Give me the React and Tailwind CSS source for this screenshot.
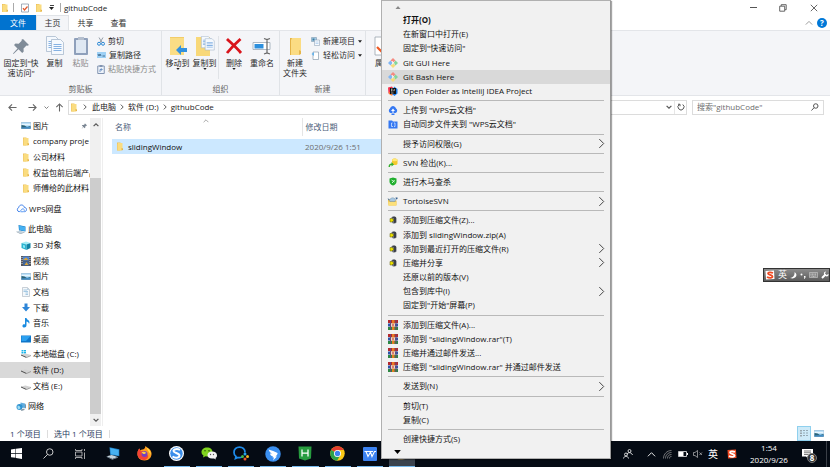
import React from "react";

/* ---------- shared drawings ---------- */

const Folder = ({ className = "h-[9px] w-[8px]" }) => (
  <svg viewBox="0 0 16 18" className={`shrink-0 ${className}`} aria-hidden="true">
    <path d="M2 1h7v16H2z" fill="#edc05a" />
    <path d="M4 2h9v12l-2 3H3V4z" fill="#fadc80" />
    <path d="M11 12l3 1v3l-3 1z" fill="#e5b548" />
  </svg>
);

const Chevron = ({ dir = "right", className = "h-[6px] w-[6px]", width = 1.6 }) => {
  const d = {
    right: "M3 1l4 4-4 4",
    down: "M1 3l4 4 4-4",
    up: "M1 7l4-4 4 4",
  }[dir];
  return (
    <svg viewBox="0 0 10 10" className={`shrink-0 ${className}`} aria-hidden="true">
      <path d={d} fill="none" stroke="currentColor" strokeWidth={width} />
    </svg>
  );
};

const Triangle = ({ up, className = "h-[3px] w-[5px]" }) => (
  <svg viewBox="0 0 10 6" className={`shrink-0 ${className}`} aria-hidden="true">
    <path d={up ? "M0 6l5-6 5 6z" : "M0 0h10L5 6z"} fill="currentColor" />
  </svg>
);

const Pin = ({ className }) => (
  <svg viewBox="0 0 16 16" className={className} aria-hidden="true">
    <path d="M9.500 1l5.500 5.500-1.500 1-1-.3-2.700 2.700.2 3-1.500 1.300L5 10.700 1 15l-.2-.2L4.300 10 .9 6.800l1.400-1.500 3 .2L8.500 3l-.3-1z" fill="#7c8794" />
  </svg>
);

const Picture = () => (
  <svg viewBox="0 0 20 14" className="h-[7px] w-[10px] shrink-0" aria-hidden="true">
    <path d="M0 0h20v14H0z" fill="#b9c6d2" />
    <path d="M1 1h18v12H1z" fill="#8fcdf5" />
    <path d="M1 3h18v4H1z" fill="#e8f5fd" />
    <path d="M1 6l6 1 5 3 7-2v5H1z" fill="#2c6275" />
    <path d="M1 11l18-1v3H1z" fill="#4893d2" />
  </svg>
);

const Drive = ({ system }) => (
  <svg viewBox="0 0 20 16" className="h-[8px] w-[10px] shrink-0" aria-hidden="true">
    {system && <path d="M1 0h4v3H1zM6 0h4v3H6zM1 4h4v3H1zM6 4h4v3H6z" fill="#19b5ea" />}
    <path d="M0 9l9-2 11 3-9 4z" fill="#d2d2d2" />
    <path d="M0 9l11 5v2L0 11z" fill="#4a4a4a" />
    <path d="M11 14l9-4v2l-9 4z" fill="#9a9a9a" />
  </svg>
);

const Sogou = ({ className, bg = "#f04a23", fg = "#fff" }) => (
  <svg viewBox="0 0 20 20" className={`shrink-0 ${className}`} aria-hidden="true">
    <path d="M1 2l17-1 1 17-17 1z" fill={bg} />
    <path d="M16 6C12 4 6 4 6 7s9 2.500 9 6-7 3-11 1" fill="none" stroke={fg} strokeWidth="3.500" />
  </svg>
);

const PcIcon = ({ className = "h-[9px] w-[10px]" }) => (
  <svg viewBox="0 0 20 18" className={`shrink-0 ${className}`} aria-hidden="true">
    <path d="M5 0l14 3v10L6 11z" fill="#1f7fc4" />
    <path d="M6 1l12 3v8L7 10z" fill="#46b1f2" />
    <path d="M1 13l7-2 9 3-8 3z" fill="#c5d3dd" />
    <path d="M1 13l8 4 8-3v1l-8 3-8-4z" fill="#7f909e" />
  </svg>
);

/* ---------- title bar and tabs ---------- */

const TitleBar = () => (
  <header className="flex h-[15px] shrink-0 items-center text-[#222]">
    <div className="flex flex-1 items-center">
      <Folder className="ml-[1px] h-[10px] w-[8px]" />
      <span className="ml-[4px] h-[9px] w-px bg-[#aaa]" />
      <button aria-label="属性" className="ml-[7px]">
        <svg viewBox="0 0 16 18" className="h-[10px] w-[8px]">
          <path d="M1 1h14v16H1z" fill="#fff" stroke="#8492a3" strokeWidth="1.500" />
          <path d="M4 9l3 4 6-7" fill="none" stroke="#e2572b" strokeWidth="2.500" />
        </svg>
      </button>
      <button aria-label="新建文件夹" className="ml-[6px]">
        <Folder className="h-[10px] w-[8px]" />
      </button>
      <button aria-label="自定义快速访问工具栏" className="ml-[6px] flex flex-col items-center gap-px">
        <span className="h-px w-[4px] bg-[#444]" />
        <Triangle className="h-[3px] w-[5px]" />
      </button>
      <span className="ml-[6px] h-[9px] w-px bg-[#aaa]" />
      <h1 className="ml-[3px] text-[8px]">githubCode</h1>
    </div>
    <div className="flex h-full text-[#555]">
      <button aria-label="最小化" className="grid w-[30px] place-items-center">
        <span className="h-px w-[7px] bg-current" />
      </button>
      <button aria-label="还原" className="grid w-[30px] place-items-center">
        <svg viewBox="0 0 8 8" className="h-[8px] w-[8px]" fill="none" stroke="currentColor" strokeWidth="0.900">
          <path d="M.7 2.200h5v5h-5zM2.200 2V.7h5v5H6" />
        </svg>
      </button>
      <button aria-label="关闭" className="grid w-[32px] place-items-center">
        <svg viewBox="0 0 8 8" className="h-[8px] w-[8px]" stroke="currentColor" strokeWidth="0.900">
          <path d="M.8.8l6.400 6.400M7.200.8L.8 7.200" />
        </svg>
      </button>
    </div>
  </header>
);

const Tabs = () => (
  <nav className="flex h-[15px] shrink-0 items-stretch text-[8px] text-[#333]">
    <button className="w-[36px] bg-[#0173cf] text-white">文件</button>
    <button className="w-[33px] border-x border-t border-[#e0e3e7] bg-[#f4f5f8]">主页</button>
    <button className="w-[33px]">共享</button>
    <button className="w-[33px]">查看</button>
    <div className="flex flex-1 items-center justify-end gap-[4px] pr-[3px] text-[#999]">
      <button aria-label="最小化功能区">
        <Chevron dir="up" className="h-[8px] w-[8px]" width={1.2} />
      </button>
      <button aria-label="帮助" className="grid h-[10px] w-[10px] place-items-center rounded-full bg-[#0078d7] text-[8px] leading-none font-bold text-white">
        ?
      </button>
    </div>
  </nav>
);

/* ---------- ribbon ---------- */

const Sheet = ({ x, y }) => (
  <g transform={`translate(${x} ${y})`}>
    <path d="M.5.500h9l3 3v12H.5z" fill="#f5f9fe" stroke="#9fb1c7" strokeWidth="0.700" />
    <path d="M2.500 5h8v1h-8zM2.500 7h8v1h-8zM2.500 9h8v1h-8zM2.500 11h8v1h-8z" fill="#86b2e3" />
  </g>
);

const ribbonIcons = {
  pin: (
    <svg viewBox="0 0 20 20" className="h-[20px] w-[20px]">
      <path d="M12 3l6 6-1.500.8-1-.3-3 3 .2 3-1.500 1.500-3.700-3.700L2.500 18 2 17.500l4.500-5L3 9l1.500-1.500 3.200.2 3-3-.2-1z" fill="#7f8b98" />
    </svg>
  ),
  copy: (
    <svg viewBox="0 0 18 20" className="h-[20px] w-[18px]">
      <Sheet x={0} y={0} />
      <Sheet x={5} y={3} />
    </svg>
  ),
  paste: (
    <svg viewBox="0 0 16 20" className="h-[20px] w-[16px]">
      <rect x="1" y="2" width="14" height="17" rx="1" fill="#8fa0bb" />
      <path d="M3 4h10v13H3z" fill="#dfe8f3" />
      <path d="M5 1h6v3H5z" fill="#b5bfce" />
    </svg>
  ),
  move: (
    <svg viewBox="0 0 18 20" className="h-[20px] w-[18px]">
      <path d="M1 1h14v18H1z" fill="#fadd85" />
      <path d="M1 1h14v1H1z" fill="#f2cc68" />
      <path d="M7 14l5-5v3h6v4h-6v3z" fill="#3291de" />
    </svg>
  ),
  copyTo: (
    <svg viewBox="0 0 20 20" className="h-[20px] w-[20px]">
      <path d="M1 1h14v19H1z" fill="#f8d878" />
      <g transform="translate(6 0) scale(.76)">
        <Sheet x={0} y={0} />
        <Sheet x={5} y={3} />
      </g>
    </svg>
  ),
  remove: (
    <svg viewBox="0 0 18 20" className="h-[20px] w-[18px]">
      <path d="M2 3c3 3 9 8 14 14M15.500 3C11 7 6 12 2 17" fill="none" stroke="#d9141b" strokeWidth="2.800" />
    </svg>
  ),
  rename: (
    <svg viewBox="0 0 20 20" className="h-[20px] w-[20px]">
      <path d="M1 6.500h17v7H1z" fill="#fff" stroke="#9aa7b5" strokeWidth="0.800" />
      <path d="M2.500 8h9v4.500h-9z" fill="#2c8fdd" />
      <path d="M12 2.500l3 1 3-1M15 3v14M12 18l3-1 3 1" fill="none" stroke="#666" strokeWidth="1.200" />
    </svg>
  ),
  newFolder: (
    <svg viewBox="0 0 16 20" className="h-[20px] w-[16px]">
      <path d="M3 2h6v17H3z" fill="#e4b347" />
      <path d="M5 2h9v14l-2 3H4V4z" fill="#fbdc83" />
      <path d="M12 14l2 1v3l-2 1z" fill="#e6b64c" />
    </svg>
  ),
  props: (
    <svg viewBox="0 0 18 20" className="h-[20px] w-[18px]">
      <path d="M1 1h16v18H1z" fill="#fff" stroke="#9aa3ad" strokeWidth="0.800" />
      <path d="M3 11l4 4 7-9" fill="none" stroke="#ef5a24" strokeWidth="2.200" />
    </svg>
  ),
};

const BigButton = ({ icon, lines, drop, className = "w-[27px]", muted }) => (
  <button className={`flex flex-col items-center pt-[5px] leading-[10px] ${className} ${muted ? "text-[#8b8b8b]" : ""}`}>
    {ribbonIcons[icon]}
    <span className="mt-[2px] flex flex-col items-center whitespace-nowrap">
      {lines.map((l) => (
        <span key={l}>{l}</span>
      ))}
    </span>
    {drop && <Triangle className="h-[2px] w-[4px] text-[#222]" />}
  </button>
);

const SmallButton = ({ children, label, drop, muted }) => (
  <button className={`flex h-[14px] items-center gap-[3px] whitespace-nowrap ${muted ? "text-[#8b8b8b]" : ""}`}>
    {children}
    <span>{label}</span>
    {drop && <Triangle className="h-[3px] w-[4px] text-[#222]" />}
  </button>
);

const Group = ({ label, className = "", children }) => (
  <section className={`flex shrink-0 flex-col border-r border-[#e0e3e7] ${className}`}>
    <div className="flex flex-1">{children}</div>
    <h2 className="h-[12px] text-center leading-[12px] text-[#666]">{label}</h2>
  </section>
);

const Ribbon = () => (
  <div className="flex h-[66px] shrink-0 overflow-hidden border-y border-[#e3e5e9] bg-[#f4f5f8] text-[8px] text-[#2b2b2b]">
    <Group label="剪贴板" className="w-[162px]">
      <BigButton icon="pin" lines={["固定到\"快", "速访问\""]} className="w-[42px]" />
      <BigButton icon="copy" lines={["复制"]} className="w-[25px]" />
      <BigButton icon="paste" lines={["粘贴"]} className="w-[27px]" muted />
      <div className="ml-[3px] pt-[3px]">
        <SmallButton label="剪切">
          <svg viewBox="0 0 16 18" className="h-[9px] w-[8px]">
            <path d="M4 1l6 10M12 1L6 11" stroke="#7b8794" strokeWidth="1.600" />
            <circle cx="4" cy="13.500" r="3" fill="none" stroke="#2886d4" strokeWidth="2" />
            <circle cx="12" cy="13.500" r="3" fill="none" stroke="#2886d4" strokeWidth="2" />
          </svg>
        </SmallButton>
        <SmallButton label="复制路径">
          <svg viewBox="0 0 18 12" className="h-[6px] w-[9px]">
            <path d="M0 0h18v12H0z" fill="#9dd0f5" />
            <path d="M2 4l2 4 2-4 2 4M10 8h1M12 8h4" fill="none" stroke="#234a6e" strokeWidth="1.400" />
          </svg>
        </SmallButton>
        <SmallButton label="粘贴快捷方式" muted>
          <svg viewBox="0 0 16 18" className="h-[9px] w-[8px]">
            <path d="M1.500 2h13v15h-13z" fill="#eef3fa" stroke="#8294b1" strokeWidth="2" />
            <path d="M5 0h6v4H5z" fill="#8294b1" />
            <path d="M6 14V9h4M8 6.500L10.500 9 8 11.500" fill="none" stroke="#4d7bb5" strokeWidth="1.500" />
          </svg>
        </SmallButton>
      </div>
    </Group>
    <Group label="组织" className="w-[118px]">
      <BigButton icon="move" lines={["移动到"]} drop className="ml-[2px] w-[27px]" />
      <BigButton icon="copyTo" lines={["复制到"]} drop />
      <span className="mt-[5px] mb-[4px] w-px bg-[#e0e3e7]" />
      <BigButton icon="remove" lines={["删除"]} drop className="w-[30px]" />
      <BigButton icon="rename" lines={["重命名"]} className="w-[26px]" />
    </Group>
    <Group label="新建" className="w-[86px]">
      <BigButton icon="newFolder" lines={["新建", "文件夹"]} className="w-[30px]" />
      <div className="ml-px pt-[3px]">
        <SmallButton label="新建项目" drop>
          <svg viewBox="0 0 18 18" className="h-[9px] w-[9px]">
            <path d="M1 1h10v8H1z" fill="#a7cce8" stroke="#6f8ba2" />
            <path d="M3 3h4v4H3z" fill="#397d9f" />
            <path d="M7 6h10v11H7z" fill="#f6fafe" stroke="#8297ac" />
            <path d="M9 10h6M9 13h6" stroke="#86b2e3" />
          </svg>
        </SmallButton>
        <SmallButton label="轻松访问" drop>
          <svg viewBox="0 0 18 18" className="h-[9px] w-[9px]">
            <path d="M4 2h11v15H4z" fill="#fff" stroke="#8b9cae" strokeWidth="1.400" />
            <path d="M1 6l5-4v8z" fill="#68b3ea" />
          </svg>
        </SmallButton>
      </div>
    </Group>
    <BigButton icon="props" lines={["属性"]} drop className="ml-[3px] w-[28px] shrink-0" />
  </div>
);

/* ---------- address bar ---------- */

const Arrow = ({ turn = "" }) => (
  <svg viewBox="0 0 10 10" className={`h-[9px] w-[9px] ${turn}`} fill="none" stroke="currentColor" strokeWidth="1.200">
    <path d="M9.500 5H1M4.500 1.500L1 5l3.500 3.500" />
  </svg>
);

const AddressRow = () => (
  <div className="flex h-[22px] shrink-0 items-center text-[8px] text-[#666]">
    <div className="flex w-[68px] items-center pl-[8px]">
      <button aria-label="后退"><Arrow /></button>
      <button aria-label="前进" className="ml-[11px]"><Arrow turn="rotate-180" /></button>
      <button aria-label="最近位置" className="ml-[7px]"><Chevron dir="down" className="h-[5px] w-[5px]" /></button>
      <button aria-label="上移" className="ml-[6px]"><Arrow turn="rotate-90" /></button>
    </div>
    <div className="flex h-[15px] flex-1 items-center border border-[#dcdcdc] pl-[1px] text-[#222]">
      <Folder />
      <Chevron className="mx-[4px] h-[6px] w-[6px] text-[#555]" />
      <a href="#pc">此电脑</a>
      <Chevron className="mx-[3px] h-[6px] w-[6px] text-[#555]" />
      <a href="#d">软件 (D:)</a>
      <Chevron className="mx-[3px] h-[6px] w-[6px] text-[#555]" />
      <a href="#code">githubCode</a>
      <span className="flex-1" />
      <button aria-label="以前的位置" className="mr-[2px] text-[#555]"><Chevron dir="down" className="h-[6px] w-[6px]" width={2} /></button>
      <button aria-label="刷新" className="grid h-full w-[12px] place-items-center border-l border-[#e6e6e6]">
        <svg viewBox="0 0 16 16" className="h-[8px] w-[8px]" fill="none" stroke="#555" strokeWidth="2">
          <path d="M11.500 3a6 6 0 1 1-7 0M2 2.500h4v4" />
        </svg>
      </button>
    </div>
    <label className="mr-[6px] ml-[5px] flex h-[15px] w-[132px] items-center border border-[#dcdcdc] px-[4px]">
      <input aria-label="搜索" placeholder={'搜索"githubCode"'} className="w-full min-w-0 bg-transparent outline-none placeholder:text-[#6d6d6d]" />
      <svg viewBox="0 0 16 16" className="h-[8px] w-[8px] shrink-0" fill="none" stroke="#555" strokeWidth="2">
        <circle cx="9.500" cy="6" r="4.500" />
        <path d="M6 9.500L1 15" />
      </svg>
    </label>
  </div>
);

/* ---------- navigation pane ---------- */

const navIcons = {
  picture: <Picture />,
  folder: <span className="flex w-[10px] shrink-0 justify-center"><Folder className="h-[9px] w-[8px]" /></span>,
  cloud: (
    <svg viewBox="0 0 22 18" className="h-[9px] w-[11px] shrink-0" fill="none" strokeWidth="2">
      <path d="M6 15.500a4.500 4.500 0 0 1-.5-8.500C6 3.500 8.500 2 11 2c3 0 5 2 5.300 4.500 2.700.3 4.700 2 4.700 4.500 0 2.700-2 4.500-4.500 4.500" stroke="#3f80ea" />
      <path d="M6 15.500c4 0 4-6 8-6 3 0 4 6 0 6H9" stroke="#5d9bf4" />
    </svg>
  ),
  pc: <PcIcon />,
  cube: (
    <svg viewBox="0 0 20 18" className="h-[9px] w-[10px] shrink-0">
      <path d="M1 4l9-3 9 3-8 3z" fill="#a4edf5" />
      <path d="M1 4l10 3v11L1 14z" fill="#2bb4d1" />
      <path d="M19 4l-8 3v11l8-4z" fill="#1183a5" />
      <path d="M4 8l4 1v5l-4-1z" fill="#8ae7f2" />
    </svg>
  ),
  video: (
    <svg viewBox="0 0 20 20" className="h-[10px] w-[10px] shrink-0">
      <path d="M0 0h20v20H0z" fill="#53565e" />
      <path d="M4 1h12v8H4z" fill="#4e86d6" />
      <path d="M4 11h12v8H4z" fill="#40679e" />
      <path d="M5 7l5-4 5 5H5zM7 18l4-6 4 6z" fill="#d9a43a" />
      <path d="M1 2h2v2H1zM1 6h2v2H1zM1 10h2v2H1zM1 14h2v2H1zM17 2h2v2h-2zM17 6h2v2h-2zM17 10h2v2h-2zM17 14h2v2h-2z" fill="#d5d7dc" />
    </svg>
  ),
  doc: (
    <svg viewBox="0 0 20 20" className="h-[10px] w-[10px] shrink-0">
      <path d="M3 1h10l4 4v14H3z" fill="#f4f8fb" stroke="#98a5b1" />
      <path d="M5 6h7M5 9h9M9 12h5M9 15h5" stroke="#7aaed6" strokeWidth="1.300" />
      <path d="M12 1v5h5z" fill="#bed0df" />
    </svg>
  ),
  download: (
    <svg viewBox="0 0 20 18" className="h-[9px] w-[10px] shrink-0">
      <path d="M7 1h6v7h5l-8 9-8-9h5z" fill="#2e86d8" />
    </svg>
  ),
  music: (
    <svg viewBox="0 0 20 20" className="h-[10px] w-[10px] shrink-0">
      <path d="M8 0h3c1 4 6 4 6 9l-1 3c0-3-3-5-5-5v7c0 7-9 6-8 1 .5-2 3-3 5-2z" fill="#1a8be0" />
    </svg>
  ),
  desktop: (
    <svg viewBox="0 0 20 16" className="h-[8px] w-[10px] shrink-0">
      <path d="M0 1h20v14H0z" fill="#1076c9" />
      <path d="M1 2h18l-9 10H1z" fill="#2ba0f0" />
    </svg>
  ),
  driveC: <Drive system />,
  drive: <Drive />,
  network: (
    <svg viewBox="0 0 20 18" className="h-[9px] w-[10px] shrink-0">
      <path d="M9 1l9 2v9l-9-1z" fill="#63adde" />
      <path d="M18 3l2 2v8l-2-1z" fill="#7c95a7" />
      <circle cx="7" cy="10" r="6" fill="#2f92d0" />
      <path d="M3 7l4 1 2 4-3 3-3-2z" fill="#9cdcf4" />
      <path d="M9 15l8-2v3l-6 2z" fill="#8699a6" />
    </svg>
  ),
};

const navRows = [
  { icon: "picture", label: "图片", pinned: true },
  { icon: "folder", label: "company proje" },
  { icon: "folder", label: "公司材料" },
  { icon: "folder", label: "权益包前后端产品" },
  { icon: "folder", label: "师傅给的此材料" },
  { icon: "cloud", label: "WPS网盘", root: true },
  { icon: "pc", label: "此电脑", root: true },
  { icon: "cube", label: "3D 对象" },
  { icon: "video", label: "视频" },
  { icon: "picture", label: "图片" },
  { icon: "doc", label: "文档" },
  { icon: "download", label: "下载" },
  { icon: "music", label: "音乐" },
  { icon: "desktop", label: "桌面" },
  { icon: "driveC", label: "本地磁盘 (C:)" },
  { icon: "drive", label: "软件 (D:)", active: true },
  { icon: "drive", label: "文档 (E:)" },
  { icon: "network", label: "网络", root: true },
];

const NavPane = () => (
  <aside className="flex w-[103px] shrink-0 border-r border-[#eee]">
    <nav className="flex w-[90px] flex-col overflow-hidden pb-[12px] text-[8px] text-[#111]">
      {navRows.map((r, i) => (
        <button
          key={i}
          className={`flex min-h-0 flex-1 items-center whitespace-nowrap ${r.root ? "mt-[5px] gap-[2px] pl-[16px]" : "gap-[2px] pl-[21px]"} ${r.active ? "bg-[#d9d9d9]" : ""}`}
        >
          {navIcons[r.icon]}
          <span>{r.label}</span>
          {r.pinned && <Pin className="mr-[2px] ml-auto h-[6px] w-[7px]" />}
        </button>
      ))}
    </nav>
    <div className="flex w-[11px] flex-col items-center bg-[#f0f0f0] text-[#555]">
      <Chevron dir="up" className="my-[4px] h-[6px] w-[6px]" width={2} />
      <span className="mt-[46px] w-full flex-1 bg-[#cdcdcd]" />
      <Chevron dir="down" className="my-[3px] h-[6px] w-[6px]" width={2} />
    </div>
  </aside>
);

/* ---------- file list ---------- */

const FileList = () => (
  <main className="min-w-0 flex-1 pl-[9px] text-[8px]">
    <table className="w-2/3 table-fixed border-collapse text-left">
      <thead>
        <tr className="h-[18px] text-[#4c607a]">
          <th className="w-[190px] border-r border-[#e5e5e5] p-0 pl-[3px] font-normal">
            <div className="flex items-center">
              <span className="w-[88px]">名称</span>
              <Chevron dir="up" className="mb-[12px] h-[6px] w-[6px] text-[#888]" width={1.2} />
            </div>
          </th>
          <th className="p-0 pl-[3px] font-normal">修改日期</th>
        </tr>
      </thead>
      <tbody>
        <tr className="h-[3px]" />
        <tr className="h-[15px] bg-[#cce8ff]">
          <td className="p-0 pl-[4px]">
            <a href="#sliding" className="flex items-center gap-[4px] text-[#111]">
              <Folder />
              slidingWindow
            </a>
          </td>
          <td className="p-0 pl-[3px] text-[#6d6d6d]">2020/9/26 1:51</td>
        </tr>
      </tbody>
    </table>
  </main>
);

const StatusBar = () => (
  <footer className="flex h-[15px] shrink-0 items-center pl-[10px] text-[8px] text-[#1e395b]">
    <span className="w-[37px]">1 个项目</span>
    <span className="h-[8px] w-px bg-[#ddd]" />
    <span className="w-[61px] pl-[6px]">选中 1 个项目</span>
    <span className="h-[8px] w-px bg-[#ddd]" />
    <div className="ml-auto flex items-center gap-[3px] self-stretch pr-[6px]">
      <button aria-label="详细信息" className="grid h-full w-[14px] place-items-center border border-[#8fd0ee] bg-[#cdeaf8]">
        <svg viewBox="0 0 18 18" className="h-[9px] w-[10px]">
          <path d="M1 2h4v3H1zM1 7h4v3H1zM1 12h4v3H1z" fill="#9aa7ae" />
          <path d="M7 3h4M13 3h4M7 8h4M13 8h4M7 13h4M13 13h4" stroke="#81939d" strokeWidth="1.500" />
        </svg>
      </button>
      <button aria-label="大图标"><Picture /></button>
    </div>
  </footer>
);

/* ---------- context menu ---------- */

const GitIcon = () => (
  <svg viewBox="0 0 20 20" className="h-[10px] w-[10px]">
    <path d="M10 0l5 5-5 4-5-4z" fill="#f58a80" />
    <path d="M0 10l5-5 4 5-4 5z" fill="#7fb6f5" />
    <path d="M20 10l-5-5-4 5 4 5z" fill="#85d59b" />
    <path d="M10 20l-5-5 5-4 5 4z" fill="#f6dc7b" />
    <path d="M8 6l5 5M9 7v6" stroke="#fff" strokeWidth="1.200" />
  </svg>
);

const ArchiveIcon = () => (
  <svg viewBox="0 0 16 16" className="h-[8px] w-[8px]">
    <path d="M5 2h8l2 2v9l-3 2H8l-2-2z" fill="#6d7178" />
    <path d="M7 1h5l2 2v9l-2 2h-2V4H7z" fill="#3b3f48" />
    <path d="M2 5h4l4 3-4 4H2z" fill="#eadf00" stroke="#5f5900" strokeWidth="1" />
  </svg>
);

const RarIcon = () => (
  <svg viewBox="0 0 20 20" className="h-[10px] w-[10px]">
    <path d="M0 0h20v6H0z" fill="#b3272d" />
    <path d="M0 7h20v6H0z" fill="#2d53a8" />
    <path d="M0 14h20v6H0z" fill="#2c8742" />
    <path d="M4 0h2v20H4zM15 0h2v20h-2z" fill="#6d4a77" />
    <path d="M8 0h5v20H8z" fill="#e77b25" />
    <path d="M6 7h8v6H6z" fill="#f3d9c0" />
    <path d="M9 8h2v4H9z" fill="#b3272d" />
  </svg>
);

const menuIcons = {
  git: <GitIcon />,
  zip: <ArchiveIcon />,
  rar: <RarIcon />,
  idea: (
    <svg viewBox="0 0 20 20" className="h-[10px] w-[10px]">
      <path d="M0 3l8-2 6 9-6 9-7-4z" fill="#f4324e" />
      <path d="M12 1l7 5v9l-6 5-5-4z" fill="#1b7de8" />
      <path d="M1 12l5 1 3 6-5-1z" fill="#f98a28" />
      <path d="M4 4h12v12H4z" fill="#111" />
      <path d="M6 6h3M7.500 6v4M6 10h3M12.500 6v3.500H10.500M6 14h5" fill="none" stroke="#fff" strokeWidth="1.200" />
    </svg>
  ),
  upload: (
    <svg viewBox="0 0 20 18" className="h-[9px] w-[10px]">
      <path d="M5 14a5 5 0 0 1-1-9C5 2 7.500 0 10 0s5 2 6 5a5 5 0 0 1-1 9z" fill="#3578f2" />
      <path d="M10 5l4 5h-3v5H9v-5H6z" fill="#fff" />
      <path d="M7 15h6v3H7z" fill="#3578f2" />
    </svg>
  ),
  sync: (
    <svg viewBox="0 0 20 18" className="h-[9px] w-[10px]">
      <path d="M1 1h7l2 2h9v14H1z" fill="#3578f2" />
      <path d="M9 6H7v7h3M12 6h2v7h-2" fill="none" stroke="#dbe8ff" strokeWidth="1.500" />
    </svg>
  ),
  svn: (
    <svg viewBox="0 0 20 20" className="h-[10px] w-[10px]">
      <path d="M8 4c0-4 11-4 11 0v7c0 4-11 4-11 0z" fill="#f4c92f" />
      <ellipse cx="13.500" cy="4" rx="5.500" ry="2.500" fill="#ffe877" />
      <path d="M1 18c0-5 3-7 6-7V8l5 5-5 4v-3c-2 0-3 1-3 4z" fill="#37ae2f" />
    </svg>
  ),
  shield: (
    <svg viewBox="0 0 16 18" className="h-[9px] w-[8px]">
      <path d="M8 1l7 2v6c0 4-3 7-7 8-4-1-7-4-7-8V3z" fill="#1fae2d" />
      <path d="M5 6l6 4M11 6l-2 3-3 3" fill="none" stroke="#dffbe1" strokeWidth="1.800" />
    </svg>
  ),
  tortoise: (
    <svg viewBox="0 0 22 20" className="h-[10px] w-[11px]">
      <path d="M2 7h8l2 2h7v10H3z" fill="#f2c440" />
      <path d="M3 12h16l-1 7H3z" fill="#fce07a" />
      <path d="M5 10c0-7 10-9 12-2l-1 3H6z" fill="#a9c8e2" stroke="#6f8fab" />
      <path d="M17 3h4v3l-3 1zM1 5l4 1-1 3z" fill="#37618f" />
    </svg>
  ),
};

const menuItems = [
  { label: "打开(O)", bold: true },
  { label: "在新窗口中打开(E)" },
  { label: "固定到\"快速访问\"" },
  { label: "Git GUI Here", icon: "git" },
  { label: "Git Bash Here", icon: "git", active: true },
  { label: "Open Folder as IntelliJ IDEA Project", icon: "idea" },
  null,
  { label: "上传到 \"WPS云文档\"", icon: "upload" },
  { label: "自动同步文件夹到 \"WPS云文档\"", icon: "sync" },
  null,
  { label: "授予访问权限(G)", sub: true },
  null,
  { label: "SVN 检出(K)...", icon: "svn" },
  null,
  { label: "进行木马查杀", icon: "shield" },
  null,
  { label: "TortoiseSVN", icon: "tortoise", sub: true },
  null,
  { label: "添加到压缩文件(Z)...", icon: "zip" },
  { label: "添加到 slidingWindow.zip(A)", icon: "zip" },
  { label: "添加到最近打开的压缩文件(R)", icon: "zip", sub: true },
  { label: "压缩并分享", icon: "zip", sub: true },
  { label: "还原以前的版本(V)" },
  { label: "包含到库中(I)", sub: true },
  { label: "固定到\"开始\"屏幕(P)" },
  null,
  { label: "添加到压缩文件(A)...", icon: "rar" },
  { label: "添加到 \"slidingWindow.rar\"(T)", icon: "rar" },
  { label: "压缩并通过邮件发送...", icon: "rar" },
  { label: "压缩到 \"slidingWindow.rar\" 并通过邮件发送", icon: "rar" },
  null,
  { label: "发送到(N)", sub: true },
  null,
  { label: "剪切(T)" },
  { label: "复制(C)" },
  null,
  { label: "创建快捷方式(S)" },
];

const ContextMenu = () => (
  <div
    role="menu"
    className="absolute top-0 bottom-[8px] left-[381px] flex w-[230px] flex-col border border-[#b0b0b0] border-r-[#999] bg-[#f1f1f1] text-[8px] text-[#111] shadow-[1px_1px_1px_rgba(0,0,0,0.35)]"
  >
    <div className="flex h-[12px] shrink-0 items-center pl-[13px] text-[#888]">
      <Triangle up className="h-[3px] w-[6px]" />
    </div>
    {menuItems.map((m, i) =>
      m ? (
        <button
          key={i}
          role="menuitem"
          className={`flex min-h-0 flex-1 items-center text-left leading-[12px] whitespace-nowrap ${m.active ? "bg-[#d9d9d9]" : ""} ${m.bold ? "font-bold" : ""}`}
        >
          <span className="flex w-[21px] shrink-0 justify-center">{menuIcons[m.icon]}</span>
          <span className="flex-1">{m.label}</span>
          {m.sub && <Chevron className="mr-[3px] h-[11px] w-[11px] text-[#444]" width={0.9} />}
        </button>
      ) : (
        <div key={i} role="separator" className="flex h-[5px] shrink-0 items-center px-[6px]">
          <span className="h-px flex-1 bg-[#b9b9b9]" />
        </div>
      )
    )}
    <div className="flex h-[12px] shrink-0 items-center pl-[12px] text-black">
      <Triangle className="h-[4px] w-[7px]" />
    </div>
  </div>
);

/* ---------- floating input method bar ---------- */

const ImeBar = () => (
  <div className="absolute top-[268px] right-0 flex h-[14px] w-[67px] items-center gap-[3px] border border-[#333] bg-linear-to-b from-[#8c8c8c] to-[#5c5c5c] px-px text-[9px] text-white">
    <Sogou className="h-[10px] w-[10px]" bg="#fff" fg="#f04a23" />
    <span className="w-[9px] leading-[10px]">英</span>
    <svg viewBox="0 0 14 14" className="h-[7px] w-[7px] shrink-0"><path d="M9 0c8 5 3 16-9 12 6-1 10-5 9-12z" fill="#fff" /></svg>
    <svg viewBox="0 0 12 14" className="h-[7px] w-[6px] shrink-0" fill="#fff"><circle cx="3" cy="5" r="2" /><path d="M8 8h3v3l-2 3H8l1-3H8z" /></svg>
    <svg viewBox="0 0 18 12" className="h-[6px] w-[9px] shrink-0"><path d="M1 1h16v10H1z" fill="#888" stroke="#ddd" /><path d="M3 4h12M3 6h12M5 9h8" stroke="#eee" strokeDasharray="2 1" /></svg>
    <svg viewBox="0 0 16 16" className="h-[8px] w-[8px] shrink-0"><path d="M2 14l7-7" stroke="#fff" strokeWidth="4" /><path d="M10 1L8 5l3 3 4-2c1 4-3 6-6 4L6 7c-1-4 1-6 4-6z" fill="#fff" /></svg>
  </div>
);

/* ---------- taskbar ---------- */

const taskApps = [
  {
    name: "开始",
    art: <svg viewBox="0 0 22 22" className="h-[11px] w-[11px]" fill="#fff"><path d="M0 3l9-1.300V10H0zM10 1.500L22 0v10H10zM0 11.500h9v8L0 18.300zM10 11.500h12V22l-12-1.800z" /></svg>,
  },
  {
    name: "搜索",
    art: <svg viewBox="0 0 22 22" className="h-[11px] w-[11px]" fill="none" stroke="#ddd" strokeWidth="1.800"><circle cx="13.500" cy="8" r="6.500" /><path d="M9 13l-8 8" /></svg>,
  },
  {
    name: "任务视图",
    art: <svg viewBox="0 0 22 20" className="h-[10px] w-[11px]" fill="none" stroke="#ccc" strokeWidth="1.600"><path d="M1 0v3h13V0M1 6h13v8H1zM1 20v-3h13v3M19 0v4M19 7v13" /></svg>,
  },
  { name: "此电脑", art: <PcIcon className="h-[13px] w-[14px]" /> },
  {
    name: "Firefox",
    art: (
      <svg viewBox="0 0 30 30" className="h-[15px] w-[15px]">
        <path d="M17 0c4 4 11 6 12 14 1 8-5 15-14 15S0 23 1 14c0-4 2-7 4-9l1 4c3-3 7-1 9-4 2-2 1-4 2-5z" fill="#ff9b1f" />
        <path d="M1 14c0-4 2-7 4-9l2 5 6 1-4 4c1 6 10 7 13 2 2 8-4 11-8 11C6 28 0 22 1 14z" fill="#f34136" />
        <circle cx="15" cy="16" r="6" fill="#7440c2" />
        <path d="M9 13c3-3 8-1 10 1-3 0-3 3-6 2z" fill="#ffd23c" />
        <path d="M19 3c7 4 9 10 8 15-2-7-5-7-8-15z" fill="#ffe14a" />
      </svg>
    ),
  },
  {
    name: "搜狗浏览器", open: true,
    art: <svg viewBox="0 0 30 30" className="h-[15px] w-[15px]"><circle cx="15" cy="15" r="15" fill="#fff" /><circle cx="15" cy="15" r="12.500" fill="#3b8eea" /><path d="M22 8c-5-3-13-2-13 2s12 4 12 9-9 6-14 2" fill="none" stroke="#fff" strokeWidth="4" /></svg>,
  },
  {
    name: "微信", open: true,
    art: (
      <svg viewBox="0 0 32 26" className="h-[13px] w-[16px]">
        <path d="M12 1c7 0 11 4 11 9s-5 9-11 9l-3-.5L4 21l1-4C2 15 1 13 1 10c0-5 5-9 11-9z" fill="#80d31f" />
        <circle cx="8" cy="7.500" r="1.500" fill="#264a0a" /><circle cx="16" cy="7.500" r="1.500" fill="#264a0a" />
        <path d="M22 9c6 0 10 3 10 8 0 2-1 4-3 5l1 3-4-2h-4c-6 0-9-3-9-7s4-7 9-7z" fill="#f2f2f2" />
        <circle cx="19" cy="15" r="1.300" fill="#555" /><circle cx="25" cy="15" r="1.300" fill="#555" />
      </svg>
    ),
  },
  {
    name: "企业微信", open: true,
    art: (
      <svg viewBox="0 0 32 30" className="h-[15px] w-[16px]">
        <path d="M24 13C24 6 19 2 13 2S2 6 2 13c0 3 1 6 4 8l-1 4 5-2c3 1 6 0 8-1" fill="none" stroke="#1e8bea" strokeWidth="3.500" />
        <circle cx="24" cy="16" r="3" fill="#26a6e8" /><circle cx="29" cy="21" r="3" fill="#f6b51d" /><circle cx="24" cy="26" r="3" fill="#e8532b" /><circle cx="19" cy="21" r="3" fill="#46b946" />
      </svg>
    ),
  },
  {
    name: "钉钉", open: true,
    art: <svg viewBox="0 0 32 32" className="h-[16px] w-[16px]"><circle cx="16" cy="16" r="15.500" fill="#3b8ff0" /><path d="M7 7c6 2 13 4 18 7 1 2-2 5-4 7h3l-8 8 2-6h-3l1-2c-4-1-6-4-6-6h4c-4-2-6-5-7-8z" fill="#fff" /></svg>,
  },
  {
    name: "HBuilder", open: true,
    art: <svg viewBox="0 0 28 30" className="h-[15px] w-[14px]"><path d="M1 1h26l-1 24-12 4-12-4z" fill="#279c3f" /><path d="M8 7v14M20 7v14M8 14h12" stroke="#fff" strokeWidth="2.500" /></svg>,
  },
  {
    name: "Chrome", open: true,
    art: (
      <svg viewBox="0 0 30 30" className="h-[15px] w-[15px]">
        <circle cx="15" cy="15" r="14.500" fill="#fbc916" />
        <path d="M15 15L2.400 7.800A14.500 14.500 0 0 1 27.600 7.800H15z" fill="#e53e30" />
        <path d="M2.400 7.800A14.500 14.500 0 0 0 14 29.500L21 18l-6-3z" fill="#2ca14b" />
        <circle cx="15" cy="15" r="7" fill="#fff" /><circle cx="15" cy="15" r="5.300" fill="#3f82ee" />
      </svg>
    ),
  },
  {
    name: "WPS", open: true,
    art: <svg viewBox="0 0 28 28" className="h-[14px] w-[14px]"><rect width="28" height="28" rx="2" fill="#3c82f0" /><path d="M3 9h17M6 9l4 10 5-9 3 9 5-10h3" fill="none" stroke="#fff" strokeWidth="2.200" /></svg>,
  },
  {
    name: "文件资源管理器", open: true, current: true,
    art: <Folder className="h-[13px] w-[14px]" />,
  },
];

const Taskbar = () => (
  <footer className="flex h-[26px] shrink-0 justify-between bg-[#050b14] text-white">
    <div className="flex w-[418px]">
      {taskApps.map((a) => (
        <button key={a.name} aria-label={a.name} className="flex flex-1 flex-col items-center px-[3px]">
          <span className={`grid w-full flex-1 place-items-center ${a.current ? "bg-[#3b434e]" : ""}`}>{a.art}</span>
          <span className={`h-px w-full ${a.open ? "bg-[#76b9ed]" : ""}`} />
        </button>
      ))}
    </div>
    <div className="flex items-center">
      <button aria-label="人脉" className="mr-[14px]">
        <svg viewBox="0 0 20 20" className="h-[10px] w-[10px]" fill="none" stroke="#fff" strokeWidth="1.600"><circle cx="13" cy="4" r="3" /><path d="M8 11c1-5 9-5 11 1" /><circle cx="6" cy="11" r="3" /><path d="M1 19c1-6 9-6 10 0" /></svg>
      </button>
      <button aria-label="显示隐藏的图标" className="mr-[7px]"><Chevron dir="up" className="h-[9px] w-[9px]" width={1} /></button>
      <svg viewBox="0 0 18 18" className="mr-[6px] h-[9px] w-[9px]" fill="none" stroke="#aaa" strokeWidth="1.300"><path d="M1 17C1 8 8 1 17 1M5 17C5 10 10 5 17 5M9 17c0-5 3-8 8-8M13 17c0-3 1-4 4-4" /></svg>
      <svg viewBox="0 0 20 12" className="mr-[5px] h-[6px] w-[10px]"><path d="M1 1h16v10H1z" fill="none" stroke="#fff" strokeWidth="1.500" /><path d="M2 2h9v8H2zM18 4h2v4h-2z" fill="#fff" /></svg>
      <svg viewBox="0 0 20 16" className="mr-[5px] h-[8px] w-[10px]" fill="none" stroke="#ccc" strokeWidth="1.300"><path d="M1 5h3l5-4v14l-5-4H1zM13 5l5 5M18 5l-5 5" /></svg>
      <span className="mr-[9px] text-[10px]">英</span>
      <Sogou className="mr-[12px] h-[10px] w-[10px]" />
      <time className="mr-[13px] flex w-[40px] flex-col items-center text-[8px] leading-[12px] whitespace-nowrap">
        <span>1:54</span>
        <span>2020/9/26</span>
      </time>
      <button aria-label="通知" className="relative mr-[9px] h-[18px] w-[15px]">
        <svg viewBox="0 0 22 20" className="h-[10px] w-[11px]"><path d="M0 0h22v15h-9v5l-5-5H0z" fill="#fff" /><path d="M4 4h14M4 7.500h14M4 11h9" stroke="#333" strokeWidth="1.300" /></svg>
        <span className="absolute right-0 bottom-0 grid h-[10px] w-[10px] place-items-center rounded-full border border-[#777] bg-[#333] text-[8px] leading-none font-bold">8</span>
      </button>
      <span className="mr-[3px] h-full w-px bg-[#3a3f47]" />
    </div>
  </footer>
);

export default function App() {
  return (
    <div className="relative flex h-screen flex-col overflow-hidden bg-white font-['Open_Sans','Noto_Sans_CJK_SC',sans-serif] leading-[12px]">
      <TitleBar />
      <Tabs />
      <Ribbon />
      <AddressRow />
      <div className="flex min-h-0 flex-1">
        <NavPane />
        <FileList />
      </div>
      <StatusBar />
      <Taskbar />
      <ContextMenu />
      <ImeBar />
    </div>
  );
}
